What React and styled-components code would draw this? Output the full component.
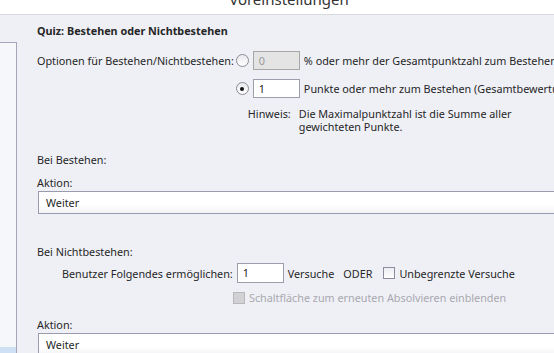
import React from 'react';
import styled, { createGlobalStyle } from 'styled-components';

const GlobalStyle = createGlobalStyle`
  html, body {
    margin: 0;
    padding: 0;
    background: #eff0f6;
    font-family: 'Noto Sans', 'Open Sans', sans-serif;
    font-size: 10.8px;
    color: #262626;
  }
  #root {
    height: 353px;
    overflow: hidden;
  }
`;

const TitleBar = styled.div`
  height: 14px;
  background: #fff;
  border-bottom: 1px solid #d9dae0;
  overflow: hidden;
  display: flex;
  justify-content: center;
  padding-left: 24px;
`;

const Title = styled.div`
  font-size: 15px;
  line-height: 16px;
  margin-top: -9px;
  color: #333;
  white-space: nowrap;
`;

const Body = styled.div`
  display: flex;
  height: 338px;
`;

const Sidebar = styled.div`
  width: 16px;
  flex: none;
  margin-top: 27px;
  border-top: 1px solid #a3a5bb;
  border-right: 1px solid #a3a5bb;
  background: #f6f7fb;
  display: flex;
  flex-direction: column;
  justify-content: flex-end;
`;

const SideSelected = styled.div`
  height: 6px;
  background: #cfe0f5;
`;

const Main = styled.div`
  flex: 1;
  min-width: 0;
  overflow: hidden;
  padding: 8px 0 0 20px;
`;

const Heading = styled.div`
  font-weight: bold;
  line-height: 16px;
  white-space: nowrap;
`;

const Label = styled.div`
  line-height: 16px;
  white-space: nowrap;
  margin-top: ${(p) => p.top || 0}px;
  padding-left: ${(p) => p.indent || 0}px;
`;

const OptionGrid = styled.div`
  display: grid;
  grid-template-columns: auto auto;
  column-gap: 2px;
  row-gap: 9px;
  margin-top: 12px;
  white-space: nowrap;
`;

const OptionCell = styled.div`
  display: flex;
  align-items: center;
  gap: 4px;
  grid-column: ${(p) => p.col || 'auto'};
`;

const RadioCircle = styled.span`
  width: 11px;
  height: 11px;
  flex: none;
  border-radius: 50%;
  border: 1px solid #8b8b95;
  background: linear-gradient(#e9e9ee, #ffffff);
  display: flex;
  align-items: center;
  justify-content: center;
  &::after {
    content: '';
    width: 4px;
    height: 4px;
    border-radius: 50%;
    background: ${(p) => (p.checked ? '#111' : 'transparent')};
  }
`;

const Field = styled.div`
  box-sizing: border-box;
  width: ${(p) => p.w || 47}px;
  height: ${(p) => p.h || 19}px;
  border: 1px solid ${(p) => (p.disabled ? '#a7a7a7' : '#9d9eab')};
  background: ${(p) => (p.disabled ? '#e4e4e4' : '#fff')};
  color: ${(p) => (p.disabled ? '#9a9a9a' : '#222')};
  padding-left: 5px;
  line-height: ${(p) => (p.h || 19) - 2}px;
  flex: none;
`;

const Hint = styled.div`
  grid-column: 2;
  display: flex;
  gap: 8px;
  line-height: 13px;
`;

const HintLabel = styled.span`
  padding-left: 12px;
`;

const Select = styled.div`
  box-sizing: border-box;
  width: 540px;
  height: 23px;
  margin-left: 1px;
  border: 1px solid #9a9bb0;
  background: linear-gradient(#ffffff 0%, #ffffff 60%, #f3f3f7 100%);
  padding-left: 7px;
  line-height: 21px;
`;

const Row = styled.div`
  display: flex;
  align-items: center;
  white-space: nowrap;
  margin-top: ${(p) => p.top || 0}px;
  padding-left: ${(p) => p.indent || 0}px;
  color: ${(p) => (p.muted ? '#a8a8ae' : 'inherit')};
`;

const Gap = styled.span`
  margin-left: ${(p) => p.l || 0}px;
  margin-right: ${(p) => p.r || 0}px;
`;

const Box = styled.span`
  width: 10px;
  height: 10px;
  flex: none;
  border: 1px solid ${(p) => (p.disabled ? '#b8b8bc' : '#8c8d9c')};
  background: ${(p) => (p.disabled ? '#d2d2d4' : 'linear-gradient(#ededf2, #ffffff)')};
  margin-right: 4px;
`;

export default function App() {
  return (
    <>
      <GlobalStyle />
      <TitleBar>
        <Title>Voreinstellungen</Title>
      </TitleBar>
      <Body>
        <Sidebar>
          <SideSelected />
        </Sidebar>
        <Main>
          <Heading>Quiz: Bestehen oder Nichtbestehen</Heading>
          <OptionGrid>
            <Label style={{ alignSelf: 'center' }}>Optionen für Bestehen/Nichtbestehen:</Label>
            <OptionCell>
              <RadioCircle />
              <Field disabled>0</Field>
              <span>% oder mehr der Gesamtpunktzahl zum Bestehen</span>
            </OptionCell>
            <OptionCell col={2}>
              <RadioCircle checked />
              <Field>1</Field>
              <span>Punkte oder mehr zum Bestehen (Gesamtbewertung)</span>
            </OptionCell>
            <Hint>
              <HintLabel>Hinweis:</HintLabel>
              <span>
                Die Maximalpunktzahl ist die Summe aller
                <br />
                gewichteten Punkte.
              </span>
            </Hint>
          </OptionGrid>

          <Label top={19}>Bei Bestehen:</Label>
          <Label top={7}>Aktion:</Label>
          <Select>Weiter</Select>

          <Label top={30}>Bei Nichtbestehen:</Label>
          <Row top={3} indent={25}>
            <Gap r={4}>Benutzer Folgendes ermöglichen:</Gap>
            <Field w={47} h={20}>1</Field>
            <Gap l={4}>Versuche</Gap>
            <Gap l={9} r={11}>ODER</Gap>
            <Box />
            <span>Unbegrenzte Versuche</span>
          </Row>
          <Row top={7} indent={196} muted>
            <Box disabled />
            <span>Schaltfläche zum erneuten Absolvieren einblenden</span>
          </Row>
          <Label top={12}>Aktion:</Label>
          <Select>Weiter</Select>
        </Main>
      </Body>
    </>
  );
}
